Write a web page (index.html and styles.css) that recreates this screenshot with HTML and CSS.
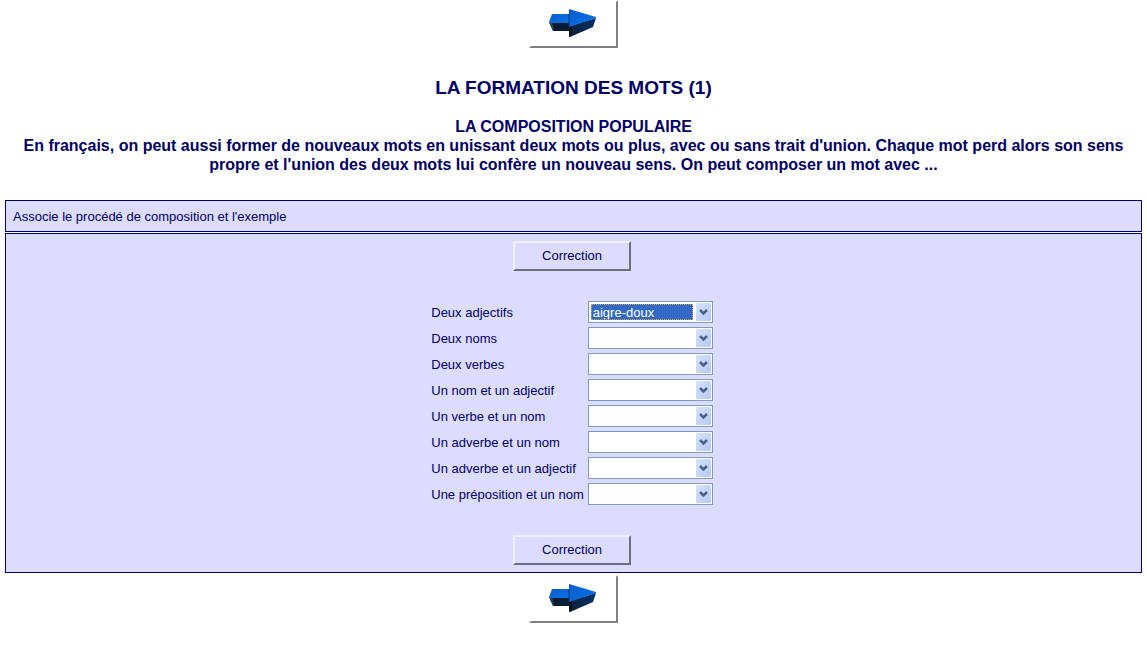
FILE: index.html
```html
<!DOCTYPE html>
<html lang="fr">
<head>
<meta charset="utf-8">
<title>La formation des mots (1)</title>
<link rel="stylesheet" href="styles.css">
</head>
<body>
<svg class="defs" aria-hidden="true">
  <defs>
    <linearGradient id="top" x1="0" y1="0" x2="1" y2="1"><stop offset="0" stop-color="#0a5ccc"/><stop offset="1" stop-color="#0874e8"/></linearGradient>
    <linearGradient id="side" x1="0" y1="0" x2="1" y2="0"><stop offset="0" stop-color="#0a2038"/><stop offset="1" stop-color="#023068"/></linearGradient>
    <linearGradient id="drop" x1="0" y1="0" x2="1" y2="1"><stop offset="0" stop-color="#d6e2fe"/><stop offset="1" stop-color="#b3cafa"/></linearGradient>
    <symbol id="arrow" viewBox="0 0 48 28">
      <path d="M0 13L3 13 20 13V22H4z" fill="#0a1c30"/>
      <path d="M0 13L3 13 5 21 4 22z" fill="#24445f"/>
      <path d="M3 5H20V14H1L0 13z" fill="url(#top)"/>
      <path d="M20 17L47 9 44 18 21 28 20 27z" fill="url(#side)"/>
      <path d="M20 17V28L23 26V17z" fill="#041427"/>
      <path d="M20 0L47 8V9L20 18z" fill="url(#top)"/>
      <path d="M20 5V18" stroke="#042c68" stroke-width="1"/>
    </symbol>
    <symbol id="chevron" viewBox="0 0 15 18">
      <rect width="15" height="18" rx="1" fill="url(#drop)"/>
      <path d="M4 7L7.500 10.500 11 7" fill="none" stroke="#4d6185" stroke-width="2.500"/>
    </symbol>
  </defs>
</svg>
<nav class="nav"><button class="nav-button" type="button" aria-label="Suivant"><svg class="arrow"><use href="#arrow"/></svg></button></nav>
<header class="heading">
  <h1 class="title">LA FORMATION DES MOTS (1)</h1>
  <h2 class="intro">LA COMPOSITION POPULAIRE<br>En français, on peut aussi former de nouveaux mots en unissant deux mots ou plus, avec ou sans trait d'union. Chaque mot perd alors son sens propre et l'union des deux mots lui confère un nouveau sens. On peut composer un mot avec ...</h2>
</header>
<main class="panels">
  <p class="panel instructions">Associe le procédé de composition et l'exemple</p>
  <form class="panel exercise">
    <button class="check" type="button">Correction</button>
    <div class="pairs">
      <label class="term" for="s1">Deux adjectifs</label>
      <div class="combo"><select class="choice active" id="s1"><option>aigre-doux</option></select><svg class="chevron"><use href="#chevron"/></svg></div>
      <label class="term" for="s2">Deux noms</label>
      <div class="combo"><select class="choice" id="s2"><option></option></select><svg class="chevron"><use href="#chevron"/></svg></div>
      <label class="term" for="s3">Deux verbes</label>
      <div class="combo"><select class="choice" id="s3"><option></option></select><svg class="chevron"><use href="#chevron"/></svg></div>
      <label class="term" for="s4">Un nom et un adjectif</label>
      <div class="combo"><select class="choice" id="s4"><option></option></select><svg class="chevron"><use href="#chevron"/></svg></div>
      <label class="term" for="s5">Un verbe et un nom</label>
      <div class="combo"><select class="choice" id="s5"><option></option></select><svg class="chevron"><use href="#chevron"/></svg></div>
      <label class="term" for="s6">Un adverbe et un nom</label>
      <div class="combo"><select class="choice" id="s6"><option></option></select><svg class="chevron"><use href="#chevron"/></svg></div>
      <label class="term" for="s7">Un adverbe et un adjectif</label>
      <div class="combo"><select class="choice" id="s7"><option></option></select><svg class="chevron"><use href="#chevron"/></svg></div>
      <label class="term" for="s8">Une préposition et un nom</label>
      <div class="combo"><select class="choice" id="s8"><option></option></select><svg class="chevron"><use href="#chevron"/></svg></div>
    </div>
    <button class="check" type="button">Correction</button>
  </form>
</main>
<nav class="nav nav-bottom"><button class="nav-button" type="button" aria-label="Suivant"><svg class="arrow"><use href="#arrow"/></svg></button></nav>
</body>
</html>
```
FILE: styles.css
```css
* { box-sizing: border-box; }
body {
  margin: 0 5px;
  background: #fff;
  color: #000066;
  font: 13px/16px "Liberation Sans", Arial, sans-serif;
}
.defs { display: block; width: 0; height: 0; }
.nav { display: flex; justify-content: center; }
.nav-bottom { padding-top: 2px; }
.nav-button {
  width: 89px;
  height: 48px;
  padding: 0 2px 3px 0;
  border: 2px solid;
  border-color: #fff #808080 #808080 #fff;
  background: #fff;
}
.arrow { display: block; width: 48px; height: 28px; margin: 0 auto; }
.heading { padding: 28px 16px 26px; text-align: center; }
.title { margin: 0 0 18px; font-size: 19px; line-height: 23px; }
.intro { margin: 0; font-size: 16px; line-height: 19px; }
.panels { display: flex; flex-direction: column; gap: 1px; }
.panel { margin: 0; border: 1px solid #000066; background: #dcdcff; }
.instructions { padding: 8px 7px 6px; }
.exercise {
  display: flex;
  flex-direction: column;
  align-items: center;
  gap: 30px;
  padding: 7px 10px 7px 7px;
}
.check {
  width: 118px;
  height: 30px;
  padding: 0;
  border: 2px solid;
  border-color: #efefff #6e6e80 #6e6e80 #efefff;
  background: #dcdcff;
  color: #000066;
  font: inherit;
}
.pairs {
  display: grid;
  grid-template-columns: auto 125px;
  gap: 4px;
  align-items: center;
}
.term { padding-top: 2px; }
.combo {
  display: flex;
  gap: 3px;
  height: 22px;
  padding: 1px;
  border: 1px solid #7f9db9;
  background: #fff;
}
.choice {
  flex: 1;
  min-width: 0;
  margin: 1px 0 1px 1px;
  padding: 0 2px;
  border: 0;
  border-radius: 0;
  outline: 0;
  appearance: none;
  background: #fff;
  color: #000066;
  font: inherit;
}
.active {
  padding: 0 1px;
  border: 1px dotted #e0a040;
  background: #316ac5 border-box;
  color: #fff;
}
.chevron { flex: none; width: 15px; height: 18px; }
```
